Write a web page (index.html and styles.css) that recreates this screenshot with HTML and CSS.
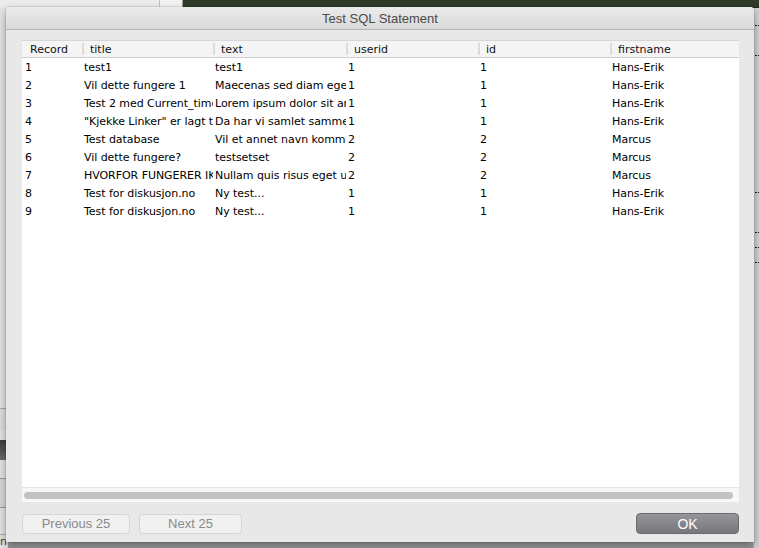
FILE: index.html
```html
<!DOCTYPE html>
<html lang="no">
<head>
  <meta charset="UTF-8">
  <title>Test SQL Statement</title>
  <link rel="stylesheet" href="styles.css">
</head>
<body>
  <div class="desktop">
    <div class="bg-top">
      <div class="bg-pane"></div>
      <div class="bg-split"></div>
      <div class="bg-dark"></div>
    </div>
    <div class="bg-left">
      <div class="bg-ctl bg-ctl-a"></div>
      <div class="bg-ctl bg-ctl-b"></div>
      <div class="bg-ctl bg-ctl-c"></div>
      <div class="bg-ctl bg-ctl-d">n</div>
    </div>
    <div class="bg-right">
      <span class="dots d1"></span>
      <span class="dots d2"></span>
      <span class="dots d3"></span>
      <span class="dots d4"></span>
      <span class="dots d5"></span>
      <span class="dots d6"></span>
    </div>

    <div class="dialog">
      <div class="titlebar">Test SQL Statement</div>

      <div class="dialog-body">
        <div class="grid">
          <div class="grid-head">
            <div class="hcell c-record">Record</div>
            <div class="hcell c-title">title</div>
            <div class="hcell c-text">text</div>
            <div class="hcell c-userid">userid</div>
            <div class="hcell c-id">id</div>
            <div class="hcell c-first">firstname</div>
          </div>

          <div class="grid-rows">
            <div class="row">
              <div class="cell c-record">1</div>
              <div class="cell c-title">test1</div>
              <div class="cell c-text">test1</div>
              <div class="cell c-userid">1</div>
              <div class="cell c-id">1</div>
              <div class="cell c-first">Hans-Erik</div>
            </div>
            <div class="row">
              <div class="cell c-record">2</div>
              <div class="cell c-title">Vil dette fungere 1</div>
              <div class="cell c-text">Maecenas sed diam eget risus varius blandit</div>
              <div class="cell c-userid">1</div>
              <div class="cell c-id">1</div>
              <div class="cell c-first">Hans-Erik</div>
            </div>
            <div class="row">
              <div class="cell c-record">3</div>
              <div class="cell c-title">Test 2 med Current_timestamp</div>
              <div class="cell c-text">Lorem ipsum dolor sit amet</div>
              <div class="cell c-userid">1</div>
              <div class="cell c-id">1</div>
              <div class="cell c-first">Hans-Erik</div>
            </div>
            <div class="row">
              <div class="cell c-record">4</div>
              <div class="cell c-title">"Kjekke Linker" er lagt til</div>
              <div class="cell c-text">Da har vi samlet sammen</div>
              <div class="cell c-userid">1</div>
              <div class="cell c-id">1</div>
              <div class="cell c-first">Hans-Erik</div>
            </div>
            <div class="row">
              <div class="cell c-record">5</div>
              <div class="cell c-title">Test database</div>
              <div class="cell c-text">Vil et annet navn komme</div>
              <div class="cell c-userid">2</div>
              <div class="cell c-id">2</div>
              <div class="cell c-first">Marcus</div>
            </div>
            <div class="row">
              <div class="cell c-record">6</div>
              <div class="cell c-title">Vil dette fungere?</div>
              <div class="cell c-text">testsetset</div>
              <div class="cell c-userid">2</div>
              <div class="cell c-id">2</div>
              <div class="cell c-first">Marcus</div>
            </div>
            <div class="row">
              <div class="cell c-record">7</div>
              <div class="cell c-title">HVORFOR FUNGERER IKKE</div>
              <div class="cell c-text">Nullam quis risus eget urna</div>
              <div class="cell c-userid">2</div>
              <div class="cell c-id">2</div>
              <div class="cell c-first">Marcus</div>
            </div>
            <div class="row">
              <div class="cell c-record">8</div>
              <div class="cell c-title">Test for diskusjon.no</div>
              <div class="cell c-text">Ny test...</div>
              <div class="cell c-userid">1</div>
              <div class="cell c-id">1</div>
              <div class="cell c-first">Hans-Erik</div>
            </div>
            <div class="row">
              <div class="cell c-record">9</div>
              <div class="cell c-title">Test for diskusjon.no</div>
              <div class="cell c-text">Ny test...</div>
              <div class="cell c-userid">1</div>
              <div class="cell c-id">1</div>
              <div class="cell c-first">Hans-Erik</div>
            </div>
          </div>

          <div class="hscroll">
            <div class="hscroll-thumb"></div>
          </div>
        </div>

        <div class="buttons">
          <button class="btn btn-prev">Previous 25</button>
          <button class="btn btn-next">Next 25</button>
          <button class="btn btn-ok">OK</button>
        </div>
      </div>
    </div>
  </div>
</body>
</html>
```

FILE: styles.css
```css
* {
  box-sizing: border-box;
  margin: 0;
  padding: 0;
}

body {
  width: 759px;
  height: 548px;
  overflow: hidden;
  background: #bdbdbd;
  font-family: 'DejaVu Sans', 'Liberation Sans', sans-serif;
}

.desktop {
  position: relative;
  width: 759px;
  height: 548px;
  background: linear-gradient(180deg, #d6d6d6 0%, #cfcfcf 90%, #9a9a9a 100%);
}

/* stuff behind the sheet */
.bg-top {
  display: flex;
  height: 8px;
}

.bg-pane {
  width: 160px;
  background: #ececec;
  border-right: 1px solid #c4c4c4;
}

.bg-split {
  width: 23px;
  background: #f2f2f2;
  border-right: 1px solid #9c9c9c;
}

.bg-dark {
  flex: 1;
  background: #2f3a27;
  border-bottom: 1px dotted #111;
}

.bg-left {
  position: absolute;
  left: 0;
  top: 8px;
  width: 8px;
  height: 540px;
  background: #e4e4e4;
}

.bg-ctl {
  position: absolute;
  left: 0;
  width: 8px;
}

.bg-ctl-a {
  top: 400px;
  height: 22px;
  border-top: 1px solid #a8a8a8;
  background: #dedede;
}

.bg-ctl-b {
  top: 432px;
  height: 20px;
  background: linear-gradient(180deg, #3a3f3a, #6b6b6b);
}

.bg-ctl-c {
  top: 470px;
  height: 30px;
  border-top: 1px solid #9a9a9a;
  border-bottom: 1px solid #9a9a9a;
  background: #d8d8d8;
}

.bg-ctl-d {
  top: 526px;
  height: 16px;
  font-size: 11px;
  color: #444;
  border-top: 1px solid #aaa;
}

.bg-right {
  position: absolute;
  right: 0;
  top: 8px;
  width: 6px;
  height: 540px;
  background: #d2d2d2;
  border-left: 1px solid #b0b0b0;
}

.dots {
  position: absolute;
  left: 1px;
  width: 4px;
  height: 1px;
  border-top: 1px dotted #222;
}

.d1 { top: 17px; }
.d2 { top: 47px; }
.d3 { top: 184px; }
.d4 { top: 224px; }
.d5 { top: 239px; }
.d6 { top: 254px; }

/* the sheet */
.dialog {
  position: absolute;
  left: 6px;
  top: 7px;
  width: 748px;
  height: 535px;
  background: #e8e8e8;
  border-radius: 4px 4px 0 0;
  box-shadow: 0 4px 10px rgba(0, 0, 0, 0.35), 0 0 0 1px rgba(0, 0, 0, 0.08);
  display: flex;
  flex-direction: column;
}

.titlebar {
  height: 23px;
  flex-shrink: 0;
  background: linear-gradient(180deg, #ebebeb 0%, #d9d9d9 100%);
  border-bottom: 1px solid #b4b4b4;
  border-radius: 4px 4px 0 0;
  text-align: center;
  font-family: 'Liberation Sans', Arial, sans-serif;
  font-size: 13px;
  line-height: 22px;
  padding-top: 1px;
  color: #4a4a4a;
}

.dialog-body {
  flex: 1;
  padding: 10px 15px 9px 16px;
  display: flex;
  flex-direction: column;
}

.grid {
  height: 462px;
  background: #fff;
  display: flex;
  flex-direction: column;
  overflow: hidden;
}

.grid-head {
  display: flex;
  height: 18px;
  flex-shrink: 0;
  background: #f5f5f5;
  border-top: 1px solid #d6d6d6;
  border-bottom: 1px solid #cdcdcd;
}

.hcell {
  position: relative;
  font-size: 11px;
  line-height: 16px;
  padding-top: 1px;
  color: #111;
  padding-left: 8px;
  white-space: nowrap;
  overflow: hidden;
}

.hcell + .hcell::before {
  content: "";
  position: absolute;
  left: 0;
  top: 2px;
  width: 2px;
  height: 12px;
  background: #dcdcdc;
}

.c-record { width: 60px; flex-shrink: 0; }
.c-title { width: 131px; flex-shrink: 0; }
.c-text { width: 133px; flex-shrink: 0; }
.c-userid { width: 132px; flex-shrink: 0; }
.c-id { width: 132px; flex-shrink: 0; }
.c-first { flex: 1; }

.grid-rows {
  flex: 1;
  padding-top: 1px;
}

.row {
  display: flex;
  height: 18px;
}

.cell {
  font-size: 11px;
  line-height: 18px;
  letter-spacing: -0.05px;
  color: #000;
  padding-left: 2px;
  white-space: nowrap;
  overflow: hidden;
}

.row .c-record { padding-left: 3px; }

.hscroll {
  height: 15px;
  flex-shrink: 0;
  background: #f7f7f7;
  border-top: 1px solid #e4e4e4;
  padding: 4px 6px 3px 2px;
}

.hscroll-thumb {
  height: 7px;
  background: #c2c2c2;
  border-radius: 4px;
}

.buttons {
  display: flex;
  align-items: center;
  gap: 9px;
  margin-top: 11px;
}

.btn {
  height: 20px;
  font-family: 'Liberation Sans', Arial, sans-serif;
  font-size: 13px;
  border-radius: 4px;
  line-height: 18px;
}

.btn-prev,
.btn-next {
  background: #f1f1f1;
  border: 1px solid #d4d4d4;
  color: #8a8a8a;
}

.btn-prev { width: 108px; margin-top: 1px; }
.btn-next { width: 103px; margin-top: 1px; }

.btn-ok {
  margin-left: auto;
  width: 103px;
  height: 21px;
  background: linear-gradient(180deg, #96959a 0%, #77767b 100%);
  border: 1px solid #6c6b70;
  color: #fff;
  font-size: 14px;
}
```
